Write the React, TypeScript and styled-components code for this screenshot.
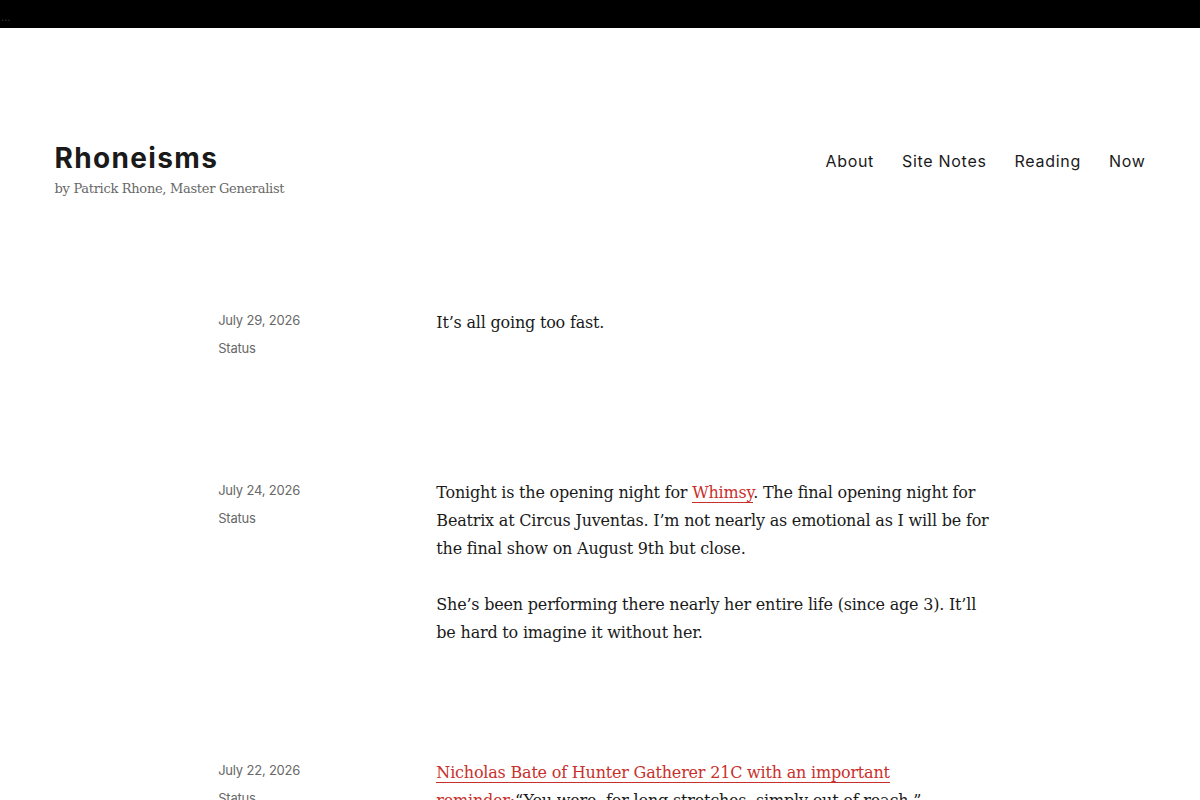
import React from 'react';
import styled, { createGlobalStyle } from 'styled-components';

const GlobalStyle = createGlobalStyle`
  html, body {
    margin: 0;
    padding: 0;
    background: #fff;
  }
  body {
    font-family: 'DejaVu Serif', serif;
    color: #1a1a1a;
  }
`;

const TopBar = styled.div`
  height: 28px;
  background: #000;
  color: #3a3a3a;
  font: 10px/1 'DejaVu Sans', sans-serif;
  padding: 13px 0 0 1px;
  box-sizing: border-box;
`;

const Site = styled.div`
  padding: 0 54.5px;
`;

const Header = styled.header`
  display: flex;
  justify-content: space-between;
  align-items: flex-start;
  padding-top: 113px;
`;

const Branding = styled.div`
  display: flex;
  flex-direction: column;
`;

const SiteTitle = styled.h1`
  margin: 0;
  font: 700 28px/35px Inter, sans-serif;
  letter-spacing: 1.35px;
  color: #1a1a1a;
`;

const Tagline = styled.p`
  margin: 2px 0 0;
  font: 13px/21px 'DejaVu Serif', serif;
  letter-spacing: -0.3px;
  color: #686868;
`;

const Nav = styled.nav`
  display: flex;
  gap: 28px;
  margin-top: 10px;
`;

const NavLink = styled.a`
  font: 400 16px/21px Inter, sans-serif;
  letter-spacing: 0.7px;
  color: #1a1a1a;
  text-decoration: none;
`;

const Main = styled.main`
  padding-top: 110px;
`;

const Article = styled.article`
  display: grid;
  grid-template-columns: 15% 20% 560px;
  padding-bottom: 112px;
  align-items: start;
`;

const Meta = styled.footer`
  grid-column: 2;
  grid-row: 1;
  display: flex;
  flex-direction: column;
  padding: 1px 0 1px;
`;

const MetaItem = styled.span`
  font: 400 13px/21px Inter, sans-serif;
  letter-spacing: -0.2px;
  color: #686868;
  margin-bottom: 7px;
`;

const Content = styled.div`
  grid-column: 3;
  grid-row: 1;
  font-size: 16px;
  line-height: 28px;
  letter-spacing: -0.2px;

  p {
    margin: 0 0 28px;
  }
  p:last-child {
    margin-bottom: 0;
  }
`;

const Link = styled.a`
  color: #c9302c;
  text-decoration: none;
  box-shadow: 0 1px 0 0 currentColor;
`;

type Post = { date: string; body: React.ReactNode };

const posts: Post[] = [
  { date: 'July 29, 2026', body: <p>It’s all going too fast.</p> },
  {
    date: 'July 24, 2026',
    body: (
      <>
        <p>
          Tonight is the opening night for <Link href="#">Whimsy</Link>. The final opening night for Beatrix at Circus
          Juventas. I’m not nearly as emotional as I will be for the final show on August 9th but close.
        </p>
        <p>She’s been performing there nearly her entire life (since age 3). It’ll be hard to imagine it without her.</p>
      </>
    ),
  },
  {
    date: 'July 22, 2026',
    body: (
      <p>
        <Link href="#">Nicholas Bate of Hunter Gatherer 21C with an important reminder:</Link>“You were, for long
        stretches, simply out of reach.”
      </p>
    ),
  },
];

const App = () => (
  <>
    <GlobalStyle />
    <TopBar>...</TopBar>
    <Site>
      <Header>
        <Branding>
          <SiteTitle>Rhoneisms</SiteTitle>
          <Tagline>by Patrick Rhone, Master Generalist</Tagline>
        </Branding>
        <Nav>
          {['About', 'Site Notes', 'Reading', 'Now'].map(item => (
            <NavLink href="#" key={item}>
              {item}
            </NavLink>
          ))}
        </Nav>
      </Header>
      <Main>
        {posts.map(post => (
          <Article key={post.date}>
            <Meta>
              <MetaItem>{post.date}</MetaItem>
              <MetaItem>Status</MetaItem>
            </Meta>
            <Content>{post.body}</Content>
          </Article>
        ))}
      </Main>
    </Site>
  </>
);

export default App;
